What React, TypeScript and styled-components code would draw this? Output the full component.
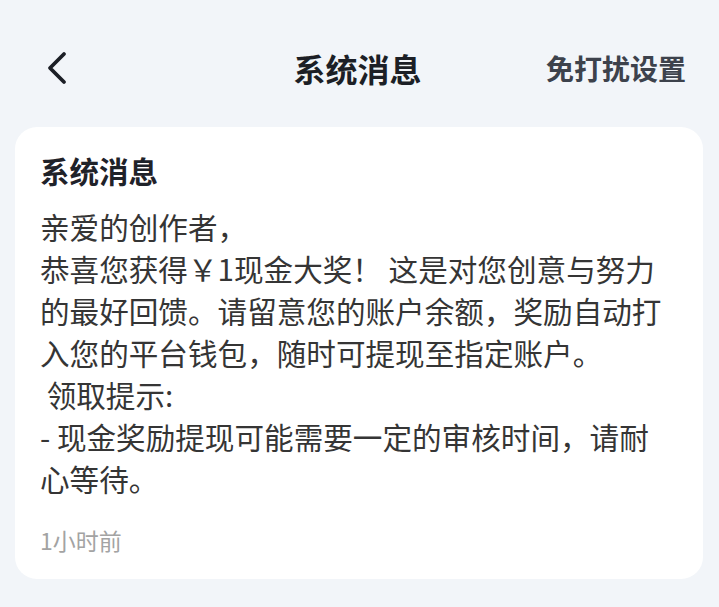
import styled, { createGlobalStyle } from "styled-components";

const GlobalStyle = createGlobalStyle`
  html, body {
    margin: 0;
    padding: 0;
    background: #f2f5f9;
  }
  body {
    font-family: "Noto Sans CJK SC", "Noto Sans", sans-serif;
  }
`;

const Page = styled.div`
  width: 719px;
  min-height: 607px;
  background: #f2f5f9;
`;

const Header = styled.div`
  box-sizing: border-box;
  height: 127px;
  padding: 18px 33px 9px;
  display: grid;
  grid-template-columns: 1fr auto 1fr;
  align-items: center;
`;

const BackButton = styled.div`
  display: flex;
  align-items: center;
  margin-left: 13px;
  width: 24px;
  height: 36px;
`;

const Title = styled.div`
  font-size: 32px;
  font-weight: 700;
  color: #1c1f26;
  line-height: 40px;
  margin-right: 4px;
`;

const RightAction = styled.div`
  justify-self: end;
  font-size: 28px;
  font-weight: 700;
  color: #3d424c;
  line-height: 40px;
`;

const Card = styled.div`
  margin: 0 16px 0 15px;
  background: #ffffff;
  border-radius: 22px;
  padding: 23px 25px 24px;
`;

const CardTitle = styled.div`
  font-size: 29.5px;
  font-weight: 700;
  color: #1f2229;
  line-height: 40px;
  margin-bottom: 16px;
`;

const Body = styled.div`
  font-size: 29.6px;
  color: #353535;
  line-height: 42px;
`;

const Line = styled.div`
  white-space: pre;
`;

const Time = styled.div`
  margin-top: 25px;
  font-size: 23px;
  line-height: 30px;
  color: #a3a3a3;
`;

const lines = [
  "亲爱的创作者，",
  "恭喜您获得￥1现金大奖！ 这是对您创意与努力",
  "的最好回馈。请留意您的账户余额，奖励自动打",
  "入您的平台钱包，随时可提现至指定账户。",
  " 领取提示:",
  "- 现金奖励提现可能需要一定的审核时间，请耐",
  "心等待。",
];

export default function App() {
  return (
    <>
      <GlobalStyle />
      <Page>
        <Header>
          <BackButton>
            <svg width="22" height="34" viewBox="0 0 22 34" fill="none">
              <polyline
                points="18,3 4,17 18,31"
                stroke="#1c1f26"
                strokeWidth="3.8"
                strokeLinecap="round"
                strokeLinejoin="round"
              />
            </svg>
          </BackButton>
          <Title>系统消息</Title>
          <RightAction>免打扰设置</RightAction>
        </Header>
        <Card>
          <CardTitle>系统消息</CardTitle>
          <Body>
            {lines.map((l, i) => (
              <Line key={i}>{l}</Line>
            ))}
          </Body>
          <Time>1小时前</Time>
        </Card>
      </Page>
    </>
  );
}
